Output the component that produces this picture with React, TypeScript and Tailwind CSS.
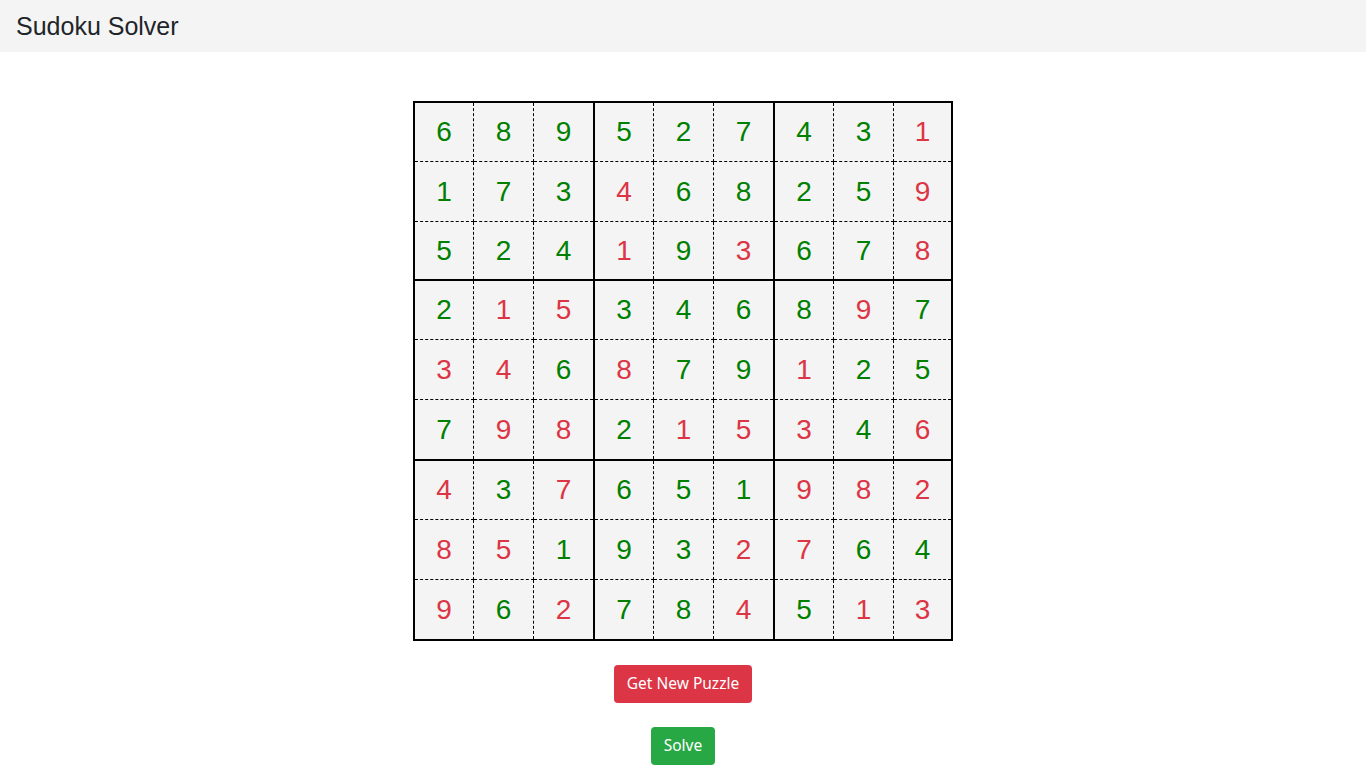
const board: [number, boolean][][] = [
  [[6, true], [8, true], [9, true], [5, true], [2, true], [7, true], [4, true], [3, true], [1, false]],
  [[1, true], [7, true], [3, true], [4, false], [6, true], [8, true], [2, true], [5, true], [9, false]],
  [[5, true], [2, true], [4, true], [1, false], [9, true], [3, false], [6, true], [7, true], [8, false]],
  [[2, true], [1, false], [5, false], [3, true], [4, true], [6, true], [8, true], [9, false], [7, true]],
  [[3, false], [4, false], [6, true], [8, false], [7, true], [9, true], [1, false], [2, true], [5, true]],
  [[7, true], [9, false], [8, false], [2, true], [1, false], [5, false], [3, false], [4, true], [6, false]],
  [[4, false], [3, true], [7, false], [6, true], [5, true], [1, true], [9, false], [8, false], [2, false]],
  [[8, false], [5, false], [1, true], [9, true], [3, true], [2, false], [7, false], [6, true], [4, true]],
  [[9, false], [6, true], [2, false], [7, true], [8, true], [4, false], [5, true], [1, false], [3, false]],
];

// box-level sizing (incl. 2px solid borders between boxes)
const boxCols = ["grid-cols-[59px_60px_59px]", "grid-cols-[59px_60px_59px]", "grid-cols-[59px_60px_57px]"];
const boxRows = ["grid-rows-[59px_60px_57px]", "grid-rows-[59px_60px_59px]", "grid-rows-[59px_60px_59px]"];

function Box({ br, bc }: { br: number; bc: number }) {
  const cells = [];
  for (let r = 0; r < 3; r++) {
    for (let c = 0; c < 3; c++) {
      const [n, given] = board[br * 3 + r][bc * 3 + c];
      cells.push(
        <div
          key={`${r}-${c}`}
          className={`flex items-center justify-center border-dashed border-black ${c < 2 ? "border-r" : ""} ${
            r < 2 ? "border-b" : ""
          } ${given ? "text-[#008000]" : "text-[#dc3545]"}`}
        >
          {n}
        </div>
      );
    }
  }
  return (
    <div
      className={`grid ${boxCols[bc]} ${boxRows[br]} border-black ${bc < 2 ? "border-r-2" : ""} ${
        br < 2 ? "border-b-2" : ""
      }`}
    >
      {cells}
    </div>
  );
}

export default function App() {
  return (
    <div className="min-h-screen bg-white" style={{ fontFamily: '"Liberation Sans", Arial, sans-serif' }}>
      <header className="h-[52px] bg-[#f4f4f4] flex items-center px-4">
        <h1 className="text-[25px] text-[#212529] leading-none">Sudoku Solver</h1>
      </header>

      <main className="flex flex-col items-center pt-[49px]">
        <div className="border-2 border-black bg-[#f4f4f4] text-[28px]">
          <div className="grid grid-cols-[180px_180px_176px]">
            {[0, 1, 2].map((br) => [0, 1, 2].map((bc) => <Box key={`${br}${bc}`} br={br} bc={bc} />))}
          </div>
        </div>

        <button
          className="mt-[24px] h-[38px] px-[13px] rounded bg-[#dc3545] text-white text-[15.5px]"
          style={{ fontFamily: '"Noto Sans", "Open Sans", sans-serif' }}
        >
          Get New Puzzle
        </button>
        <button
          className="mt-[24px] h-[38px] px-[13px] rounded bg-[#28a745] text-white text-[15.5px]"
          style={{ fontFamily: '"Noto Sans", "Open Sans", sans-serif' }}
        >
          Solve
        </button>
      </main>
    </div>
  );
}
